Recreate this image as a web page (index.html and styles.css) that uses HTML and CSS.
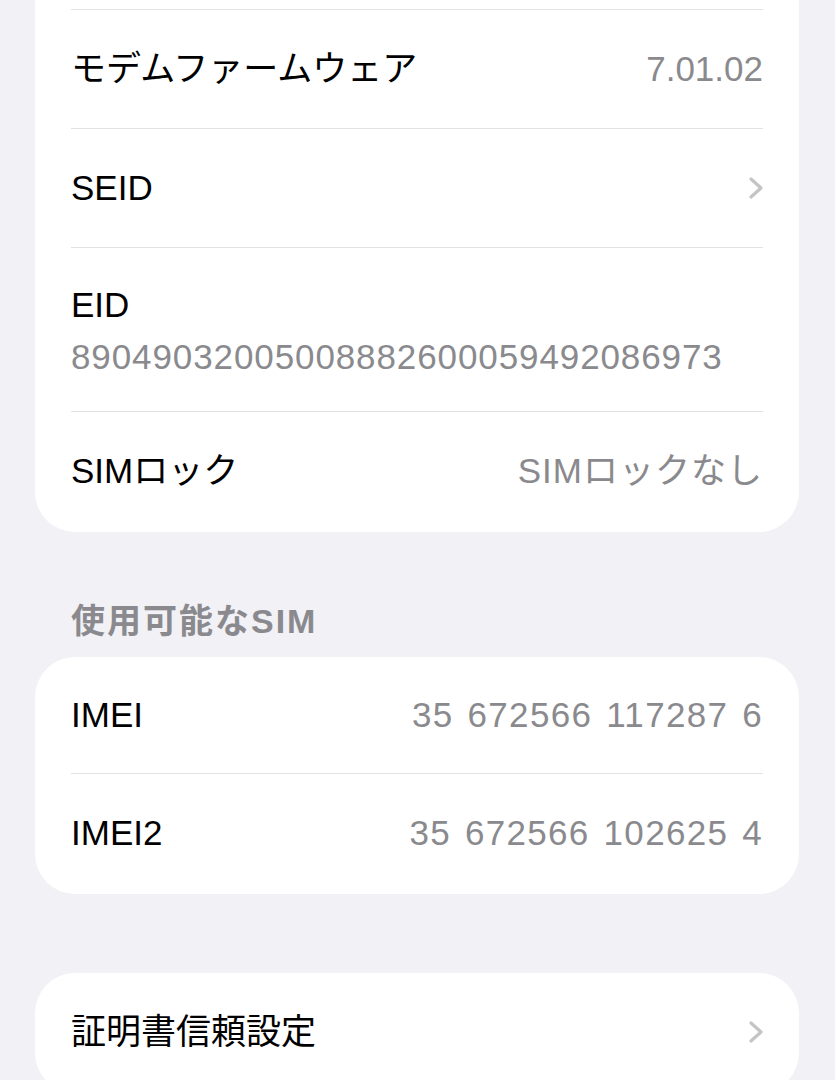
FILE: index.html
```html
<!DOCTYPE html>
<html lang="ja">
<head>
<meta charset="utf-8">
<link rel="stylesheet" href="styles.css">
</head>
<body>
<div class="page">
  <div class="card card-top">
    <div class="stub"></div>
    <div class="row"><div class="row-inner"><span class="label">モデムファームウェア</span><span class="value">7.01.02</span></div></div>
    <div class="row"><div class="row-inner"><span class="label">SEID</span>
      <svg class="chev" viewBox="0 0 16 24" width="16" height="24"><polyline points="3,3 13,12 3,21" fill="none" stroke="#c4c4c7" stroke-width="3.2" stroke-linecap="round" stroke-linejoin="round"/></svg></div></div>
    <div class="row"><div class="row-inner stack"><span class="label">EID</span><span class="value num">89049032005008882600059492086973</span></div></div>
    <div class="row"><div class="row-inner"><span class="label">SIMロック</span><span class="value wide">SIMロックなし</span></div></div>
  </div>

  <div class="section-header">使用可能なSIM</div>

  <div class="card">
    <div class="row"><div class="row-inner short"><span class="label">IMEI</span><span class="value imei">35 672566 117287 6</span></div></div>
    <div class="row"><div class="row-inner"><span class="label">IMEI2</span><span class="value imei">35 672566 102625 4</span></div></div>
  </div>

  <div class="card card-last">
    <div class="row"><div class="row-inner"><span class="label">証明書信頼設定</span>
      <svg class="chev" viewBox="0 0 16 24" width="16" height="24"><polyline points="3,3 13,12 3,21" fill="none" stroke="#c4c4c7" stroke-width="3.2" stroke-linecap="round" stroke-linejoin="round"/></svg></div></div>
  </div>
</div>
</body>
</html>
```
FILE: styles.css
```css
html, body {
  margin: 0;
  padding: 0;
  background: #f1f1f6;
}
body {
  font-family: "Liberation Sans", "Noto Sans CJK JP", sans-serif;
  font-size: 35px;
  color: #000;
  overflow: hidden;
  height: 1080px;
}
.page {
  width: 764px;
  margin-left: 35px;
}
.card {
  background: #fff;
  border-radius: 40px;
  overflow: hidden;
  padding-bottom: 2px;
}
.card-top {
  border-radius: 0 0 40px 40px;
}
.stub {
  height: 9px;
  margin: 0 36px;
  border-bottom: 1px solid #e2e2e5;
}
.row {
  padding: 0 36px;
}
.row-inner {
  height: 118px;
  display: flex;
  align-items: center;
  justify-content: space-between;
  border-bottom: 1px solid #e2e2e5;
  line-height: 42px;
}
.row-inner.short {
  height: 116px;
}
.row:last-child .row-inner {
  border-bottom: none;
}
.row-inner.stack {
  height: auto;
  flex-direction: column;
  align-items: flex-start;
  justify-content: flex-start;
  padding-top: 36px;
  padding-bottom: 33px;
  gap: 10px;
}
.label {
  color: #000;
}
.value {
  color: #8a8a8e;
}
.wide {
  letter-spacing: 1px;
}
.num {
  letter-spacing: 0.9px;
}
.imei {
  letter-spacing: 1.3px;
  word-spacing: 3px;
}
.chev {
  display: block;
  margin-right: -1px;
}
.section-header {
  margin: 68px 0 15px 36px;
  line-height: 42px;
  font-size: 34px;
  letter-spacing: 2px;
  font-weight: 600;
  color: #8a8a8e;
}
.card-last {
  margin-top: 79px;
}
```
